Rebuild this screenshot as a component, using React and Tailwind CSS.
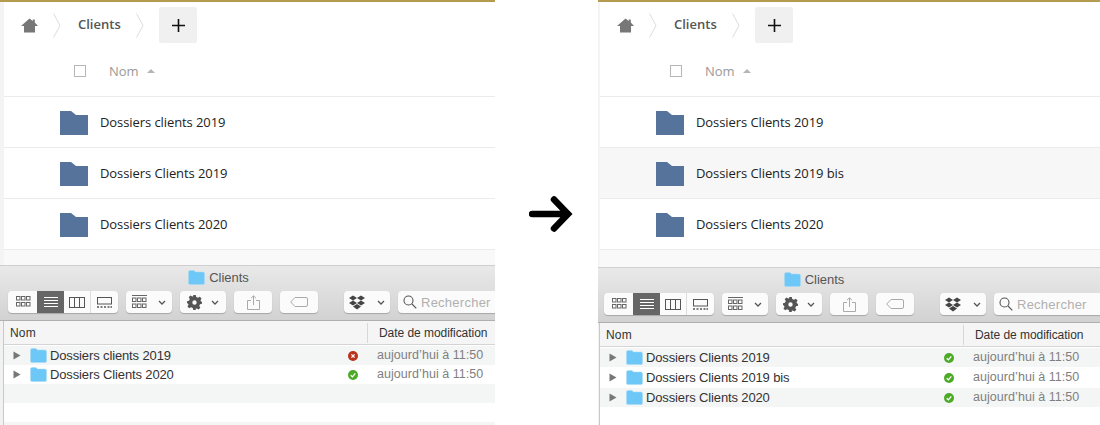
const OPEN = 'font-["Open_Sans",sans-serif]';
const SYS = 'font-["Liberation_Sans",Arial,sans-serif]';

function Home() {
  return (
    <svg width="17" height="15" viewBox="0 0 17 15" fill="#777777">
      <path d="M8.5 0.5 L11.8 3 V1.5 H13.8 V4.6 L17 8 H14 V14.5 H3 V8 H0 Z" />
    </svg>
  );
}
function Sep() {
  return (
    <svg width="8" height="25" viewBox="0 0 8 25" fill="none" stroke="#dcdcdc" strokeWidth="1">
      <path d="M0.5 0.5 L7 12.5 L0.5 24.5" />
    </svg>
  );
}
function WebFolder() {
  return (
    <svg width="28" height="24" viewBox="0 0 28 24" fill="#55739b" className="shrink-0">
      <path d="M0 0 H11 L16 4 H28 V24 H0 Z" />
    </svg>
  );
}
function WebRow({ name, hl }) {
  return (
    <div className={`h-[51px] flex items-center pl-[56px] pt-[1px] gap-3 border-b border-[#ebebeb] ${hl ? 'bg-[#f7f7f7]' : 'bg-white'}`}>
      <WebFolder />
      <span className={`${OPEN} text-[13px] text-[#222222] tracking-[-0.08px]`}>{name}</span>
    </div>
  );
}
function Web({ rows, h }) {
  return (
    <div className={`${h} bg-[#f9f9f9] flex flex-col overflow-hidden`}>
      <div className="bg-white">
        <div className="h-[41px] pt-[5px] flex items-center">
          <div className="pl-[17px] w-[49px]"><Home /></div>
          <Sep />
          <span className={`${OPEN} font-semibold text-[13px] text-[#555555] ml-[17px] w-[58px]`}>Clients</span>
          <Sep />
          <div className="ml-[15px] w-[38px] h-[36px] rounded-[2px] bg-[#f0f0f0] flex items-center justify-center">
            <svg width="13" height="13" viewBox="0 0 13 13" stroke="#111111" strokeWidth="1.6"><path d="M6.5 0 V13 M0 6.5 H13" /></svg>
          </div>
        </div>
        <div className="h-[54px] pt-[3px] border-b border-[#ebebeb] flex items-center pl-[70px]">
          <div className="w-[12px] h-[12px] border border-[#b5b5b5]" />
          <span className={`${OPEN} text-[13px] text-[#999999] ml-[23px] pt-[2px]`}>Nom</span>
          <span className="ml-[8px] w-0 h-0 border-x-[4px] border-x-transparent border-b-[4px] border-b-[#b5b5b5]" />
        </div>
      </div>
      {rows.map((r) => <WebRow key={r.name} {...r} />)}
    </div>
  );
}

function Btn({ w, children, className = '' }) {
  return (
    <div className={`${w} h-[22px] bg-[#fbfbfb] rounded-[4px] shadow-[0_1px_1px_rgba(0,0,0,0.22)] flex items-center justify-center shrink-0 ${className}`}>
      {children}
    </div>
  );
}
function Chev() {
  return (
    <svg width="8" height="5" viewBox="0 0 8 5" fill="none" stroke="#555555" strokeWidth="1.3"><path d="M1 1 L4 4 L7 1" /></svg>
  );
}
function Grid({ lines }) {
  return (
    <svg width="15" height="14" viewBox="0 0 15 14" fill="none" stroke="#666666" strokeWidth="1">
      {lines && <path d="M0 0.5 H15" />}
      {[3, 9].map((y) => [0.5, 5.5, 10.5].map((x) => <rect key={`${x}${y}`} x={x} y={y - (lines ? 0 : 1.5)} width="3.5" height="3.5" />))}
    </svg>
  );
}
function Toolbar() {
  return (
    <div className="h-[22px] flex items-center">
      <div className="flex w-[110px] h-[22px] bg-[#fbfbfb] rounded-[4px] shadow-[0_1px_1px_rgba(0,0,0,0.22)] overflow-hidden shrink-0">
        <div className="w-[29px] flex items-center justify-center pl-[1px]"><Grid /></div>
        <div className="w-[27px] bg-[#666666] flex items-center justify-center">
          <svg width="14" height="10" viewBox="0 0 14 10" stroke="#ffffff" strokeWidth="1"><path d="M0 0.5 H14 M0 3.5 H14 M0 6.5 H14 M0 9.5 H14" /></svg>
        </div>
        <div className="w-[27px] flex items-center justify-center border-r border-[#dddddd]">
          <svg width="16" height="11" viewBox="0 0 16 11" fill="none" stroke="#555555" strokeWidth="1"><rect x="0.5" y="0.5" width="15" height="10" /><path d="M5.5 0.5 V10.5 M10.5 0.5 V10.5" /></svg>
        </div>
        <div className="flex-1 flex items-center justify-center">
          <svg width="15" height="11" viewBox="0 0 15 11" fill="none" stroke="#555555" strokeWidth="1"><rect x="0.5" y="0.5" width="14" height="6.5" /><path d="M0 10 H2 M3.5 10 H5.5 M7 10 H9 M10.5 10 H12.5 M13.5 10 H15" strokeWidth="1.6" /></svg>
        </div>
      </div>
      <Btn w="w-[46px]" className="ml-[8px] gap-[11px]"><Grid lines /><Chev /></Btn>
      <Btn w="w-[46px]" className="ml-[8px] gap-[9px]">
        <svg width="15" height="15" viewBox="0 0 24 24" fill="#555555">
          <path fillRule="evenodd" d="M10 0 H14 L14.8 3.2 L17.6 4.4 L20.5 2.7 L23.3 5.5 L21.6 8.4 L22.8 11.2 L24 10 V14 L20.8 14.8 L19.6 17.6 L21.3 20.5 L18.5 23.3 L15.6 21.6 L14 22 V24 H10 L9.2 20.8 L6.4 19.6 L3.5 21.3 L0.7 18.5 L2.4 15.6 L1.2 12.8 L0 14 V10 L3.2 9.2 L4.4 6.4 L2.7 3.5 L5.5 0.7 L8.4 2.4 L10 2 Z M12 8.5 A3.5 3.5 0 1 0 12 15.5 A3.5 3.5 0 1 0 12 8.5 Z" />
        </svg>
        <Chev />
      </Btn>
      <Btn w="w-[38px]" className="ml-[8px]">
        <svg width="13" height="15" viewBox="0 0 13 15" fill="none" stroke="#aaaaaa" strokeWidth="1"><path d="M4 5.5 H0.5 V14.5 H12.5 V5.5 H9 M6.5 10 V1 M4 3.2 L6.5 0.8 L9 3.2" /></svg>
      </Btn>
      <Btn w="w-[38px]" className="ml-[8px]">
        <svg width="18" height="10" viewBox="0 0 18 10" fill="none" stroke="#aaaaaa" strokeWidth="1"><path d="M5 0.5 H16 Q17.5 0.5 17.5 2 V8 Q17.5 9.5 16 9.5 H5 L0.7 5 Z" /></svg>
      </Btn>
      <Btn w="w-[46px]" className="ml-[26px] gap-[12px]">
        <svg width="16" height="15" viewBox="0 0 16 15" fill="#444444">
          <path d="M4 0.5 L8 3 L4 5.5 L0 3 Z M12 0.5 L16 3 L12 5.5 L8 3 Z M4 5.5 L8 8 L4 10.5 L0 8 Z M12 5.5 L16 8 L12 10.5 L8 8 Z M8 9 L12 11.5 L8 14.5 L4 11.5 Z" />
        </svg>
        <Chev />
      </Btn>
      <Btn w="w-[110px]" className="ml-[8px] !justify-start pl-[5px] gap-[4px]">
        <svg width="14" height="14" viewBox="0 0 14 14" fill="none" stroke="#555555" strokeWidth="1.1"><circle cx="5.5" cy="5.5" r="4.5" /><path d="M9 9 L13.3 13.3" /></svg>
        <span className={`${SYS} text-[13px] text-[#b0b0b0] tracking-[0.25px] pt-[1px]`}>Rechercher</span>
      </Btn>
    </div>
  );
}
function MacFolder() {
  return (
    <svg width="17" height="15" viewBox="0 0 17 15" className="shrink-0">
      <path d="M0.5 2 Q0.5 0.5 2 0.5 H6 L7.5 2 H15 Q16.5 2 16.5 3.5 V13 Q16.5 14.5 15 14.5 H2 Q0.5 14.5 0.5 13 Z" fill="#6dc8f7" stroke="#a5dcf5" strokeWidth="0.5" />
    </svg>
  );
}
function Status({ ok }) {
  return (
    <svg width="10" height="10" viewBox="0 0 10 10" className="shrink-0">
      <circle cx="5" cy="5" r="5" fill={ok ? '#4caa27' : '#b8321c'} />
      {ok
        ? <path d="M2.7 5.2 L4.4 6.9 L7.3 3.3" fill="none" stroke="#ffffff" strokeWidth="1.3" />
        : <path d="M3.4 3.4 L6.6 6.6 M6.6 3.4 L3.4 6.6" fill="none" stroke="#ffffff" strokeWidth="1.3" />}
    </svg>
  );
}
function MacRow({ row, h, alt }) {
  return (
    <div className={`${h} flex items-center pl-[9px] ${alt ? 'bg-[#f4f5f5]' : 'bg-white'}`}>
      {row && (
        <>
          <svg width="8" height="9" viewBox="0 0 8 9" fill="#777777" className="shrink-0"><path d="M0.5 0.5 L7.5 4.5 L0.5 8.5 Z" /></svg>
          <div className="ml-[9px]"><MacFolder /></div>
          <span className={`${SYS} ml-[3px] text-[13px] text-[#333333] w-[298px] tracking-[-0.13px] whitespace-nowrap`}>{row.name}</span>
          <Status ok={row.ok} />
          <span className={`${SYS} ml-[19px] text-[12.5px] text-[#808080] tracking-[0.05px] whitespace-nowrap`}>aujourd’hui à 11:50</span>
        </>
      )}
    </div>
  );
}
function Finder({ rows, rowH, title, pad, strip, tail }) {
  return (
    <div className="flex-1 flex flex-col overflow-hidden border-t border-[#cfcfcf]">
      <div className="h-[55px] bg-gradient-to-b from-[#e9e9e9] to-[#d2d2d2] border-b border-[#b0b0b0] flex flex-col shrink-0">
        <div className={`h-[25px] pb-[2px] flex items-center justify-center gap-[4px] ${title}`}>
          <MacFolder />
          <span className={`${SYS} text-[13px] text-[#555555]`}>Clients</span>
        </div>
        <div className={pad}><Toolbar /></div>
      </div>
      <div className="flex-1 flex bg-white">
        <div className={`${strip} bg-[#f2f2f2] border-r border-[#c8c8c8] shrink-0`} />
        <div className="flex-1 min-w-0">
          <div className="h-[24px] bg-[#f5f5f5] border-b border-[#d4d4d4] flex items-center">
            <span className={`${SYS} ml-[6px] w-[357px] text-[12px] text-[#333333] tracking-[0.2px]`}>Nom</span>
            <div className="h-[20px] border-l border-[#d8d8d8] flex items-center pl-[11px]">
              <span className={`${SYS} text-[12px] text-[#333333] tracking-[-0.05px] whitespace-nowrap`}>Date de modification</span>
            </div>
          </div>
          <div className="h-[1px]" />
          {rows.map((r, i) => <MacRow key={r.name} row={r} h={rowH[i]} alt={i % 2 === 0} />)}
          {tail.map((a, i) => <MacRow key={i} h={a.h} alt={a.alt} />)}
        </div>
      </div>
    </div>
  );
}

export default function App() {
  return (
    <div className="flex w-[1100px] h-[425px] bg-white overflow-hidden">
      <div className="w-[495px] shrink-0 flex flex-col overflow-hidden">
        <div className="h-[2px] bg-[#b59b50] shrink-0" />
        <div className="h-[263px] shrink-0 border-l-[4px] border-[#f4f4f4]">
          <Web
            h="h-full"
            rows={[{ name: 'Dossiers clients 2019' }, { name: 'Dossiers Clients 2019' }, { name: 'Dossiers Clients 2020' }]}
          />
        </div>
        <Finder
          title="pr-[58px]"
          pad="pl-[8px]"
          strip="w-[4px]"
          rowH={['h-[19px]', 'h-[19px]']}
          rows={[{ name: 'Dossiers clients 2019', ok: false }, { name: 'Dossiers Clients 2020', ok: true }]}
          tail={[{ h: 'h-[19px]', alt: true }, { h: 'h-[19px]', alt: false }, { h: 'h-[19px]', alt: true }]}
        />
      </div>
      <div className="w-[103px] shrink-0 flex items-center justify-center pl-[8px] pt-[2px]">
        <svg width="44" height="36" viewBox="0 0 44 36" fill="none" stroke="#000000" strokeWidth="6.5" strokeLinecap="round" strokeLinejoin="miter">
          <path d="M3 18 H38 M25 3.5 L39 18 L25 32.5" />
        </svg>
      </div>
      <div className="w-[502px] shrink-0 flex flex-col overflow-hidden">
        <div className="h-[2px] bg-[#b59b50] shrink-0" />
        <div className="h-[265px] shrink-0 border-l-[2px] border-[#f4f4f4]">
          <Web
            h="h-full"
            rows={[{ name: 'Dossiers Clients 2019' }, { name: 'Dossiers Clients 2019 bis', hl: true }, { name: 'Dossiers Clients 2020' }]}
          />
        </div>
        <Finder
          title="pr-[70px]"
          pad="pl-[6px]"
          strip="w-[2px]"
          rowH={['h-[19px]', 'h-[21px]', 'h-[19px]']}
          rows={[{ name: 'Dossiers Clients 2019', ok: true }, { name: 'Dossiers Clients 2019 bis', ok: true }, { name: 'Dossiers Clients 2020', ok: true }]}
          tail={[{ h: 'h-[19px]', alt: false }]}
        />
      </div>
    </div>
  );
}
